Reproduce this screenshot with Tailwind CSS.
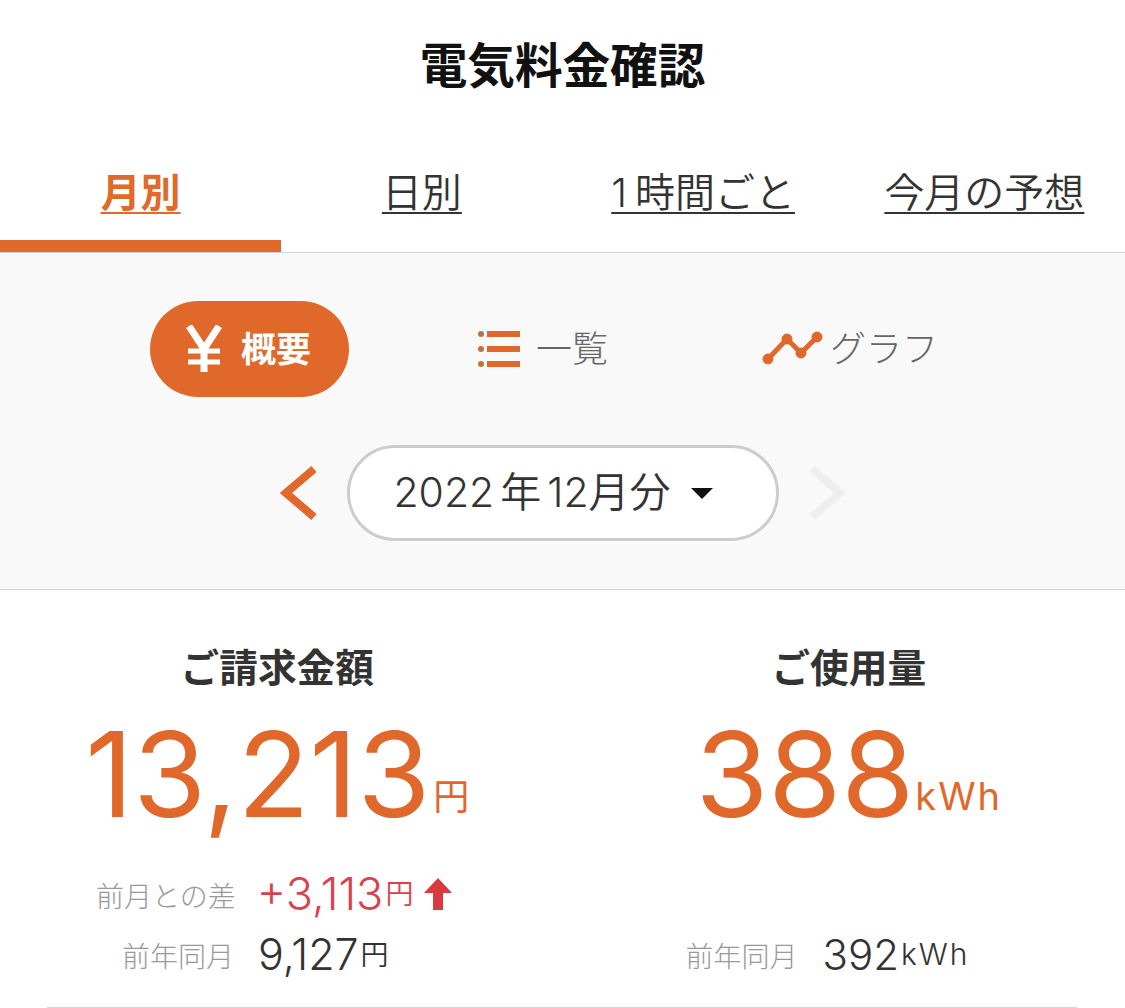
<!DOCTYPE html>
<html lang="ja">
  <head>
    <meta charset="UTF-8" />
    <title>電気料金確認</title>
    <script src="https://cdn.jsdelivr.net/npm/@tailwindcss/browser@4"></script>
  </head>
  <body class="bg-white h-[1008px] overflow-hidden font-['Inter','Noto_Sans_CJK_JP',sans-serif] text-[#333]">
    <h1 class="h-[133px] pt-[33px] text-center text-[47.6px] leading-[66px] font-bold text-[#111]">電気料金確認</h1>

    <nav class="grid grid-cols-4 h-[120px] border-b border-[#d4d4d4] text-[40px] leading-[50px] font-[350]">
      <a class="relative pt-[35px] text-center font-bold text-[#e06a2a] underline decoration-2 underline-offset-[5px]">月別<span class="absolute left-0 right-0 bottom-0 h-[12px] bg-[#e06a2a]"></span></a>
      <a class="pt-[35px] text-center underline decoration-2 underline-offset-[5px]">日別</a>
      <a class="pt-[35px] text-center underline decoration-2 underline-offset-[5px]"><span class="tracking-[8px]">1</span>時間ごと</a>
      <a class="pt-[35px] text-center underline decoration-2 underline-offset-[5px]">今月の予想</a>
    </nav>

    <section class="h-[337px] bg-[#f9f9f9] border-b border-[#d4d4d4] pt-[48px]">
      <div class="flex items-center h-[96px]">
        <button class="ml-[150px] w-[199px] h-[96px] rounded-full bg-[#e0682a] text-white flex items-center pl-[36px] gap-[19px]">
          <svg class="w-[36px] h-[48px]" viewBox="0 0 36 48" fill="none" stroke="white" stroke-width="7">
            <path d="M3 1 L18 24 L33 1 M18 24 V47" />
            <path d="M2 26 H34 M2 37 H34" stroke-width="5" />
          </svg>
          <span class="text-[35px] font-bold leading-none">概要</span>
        </button>
        <div class="ml-[129px] flex items-center gap-[15px] text-[#666] text-[36px] font-light">
          <svg class="w-[43px] h-[38px]" viewBox="0 0 43 38" fill="#e0682a">
            <circle cx="3" cy="4" r="3" fill="#b9743f" /><circle cx="3" cy="19" r="3" fill="#b9743f" /><circle cx="3" cy="34" r="3" fill="#b9743f" />
            <rect x="9" y="1" width="33" height="6" /><rect x="9" y="16" width="33" height="6" /><rect x="9" y="31" width="33" height="6" />
          </svg>
          <span>一覧</span>
        </div>
        <div class="ml-[154px] flex items-center gap-[7px] text-[#666] text-[36px] font-light">
          <svg class="w-[61px] h-[36px]" viewBox="0 0 61 36" fill="#e0682a" stroke="#e0682a">
            <path d="M6 28 L25 8 L39 22 L55 6" fill="none" stroke-width="5" />
            <circle cx="6" cy="28" r="5" /><circle cx="25" cy="8" r="5" /><circle cx="39" cy="22" r="5" /><circle cx="55" cy="6" r="5" />
          </svg>
          <span>グラフ</span>
        </div>
      </div>

      <div class="mt-[48px] flex items-center">
        <svg class="ml-[280px] w-[37px] h-[54px]" viewBox="0 0 37 54" fill="none" stroke="#e0682a" stroke-width="8">
          <path d="M34 3 L6 27 L34 51" />
        </svg>
        <button class="ml-[30px] w-[432px] h-[96px] pr-[20px] rounded-full bg-white border-[3px] border-[#ccc] flex items-center justify-center text-[41px] font-[350]">
          <span>2022</span><span class="ml-[6px]">年</span><span class="ml-[6px]">12月分</span>
          <span class="ml-[20px] w-0 h-0 border-x-[11px] border-x-transparent border-t-[11px] border-t-[#111]"></span>
        </button>
        <svg class="ml-[30px] w-[37px] h-[54px]" viewBox="0 0 37 54" fill="none" stroke="#eee" stroke-width="8">
          <path d="M3 3 L31 27 L3 51" />
        </svg>
      </div>
    </section>

    <section class="relative grid grid-cols-2 pt-[48px] h-[418px]">
      <div class="flex flex-col items-center pr-[8px]">
        <h2 class="text-[38.7px] font-bold leading-[60px]">ご請求金額</h2>
        <p class="mt-[16px] text-[#e0682a] leading-[120px] text-[118px]">13,213<span class="ml-[3px] text-[36px] leading-none align-[7px]">円</span></p>
        <dl class="mt-[33px] self-start ml-[96px] flex items-center h-[60px]">
          <dt class="text-[28px] text-[#999] font-light">前月との差</dt>
          <dd class="ml-[21px] pb-[6px] text-[#d9414f] text-[45px] flex items-center font-[350]">+3,113<span class="ml-[2px] text-[28px]">円</span>
            <svg class="ml-[11px] w-[28px] h-[32px]" viewBox="0 0 28 32" fill="#d93a3f"><path d="M14 0 L28 15 H19 V32 H9 V15 H0 Z" /></svg>
          </dd>
        </dl>
        <dl class="self-start ml-[122px] flex items-center h-[60px]">
          <dt class="text-[28px] text-[#999] font-light">前年同月</dt>
          <dd class="ml-[24px] pb-[6px] text-[43px] font-[350]">9,127<span class="ml-[2px] text-[28px] leading-none align-[5px]">円</span></dd>
        </dl>
      </div>
      <div class="flex flex-col items-center pl-[10px]">
        <h2 class="text-[38.7px] font-bold leading-[60px]">ご使用量</h2>
        <p class="mt-[16px] text-[#e0682a] leading-[120px] text-[118px]">388<span class="ml-[1px] text-[38px] tracking-[2px] leading-none align-[7px]">kWh</span></p>
        <dl class="mt-[93px] self-start ml-[113px] flex items-center h-[60px]">
          <dt class="text-[28px] text-[#999] font-light">前年同月</dt>
          <dd class="ml-[25px] pb-[6px] text-[42px] font-[350]">392<span class="ml-[2px] text-[30px] tracking-[2px] leading-none align-[5px]">kWh</span></dd>
        </dl>
      </div>
      <div class="absolute left-[47px] right-[48px] bottom-0 h-px bg-[#d4d4d4]"></div>
    </section>
  </body>
</html>
